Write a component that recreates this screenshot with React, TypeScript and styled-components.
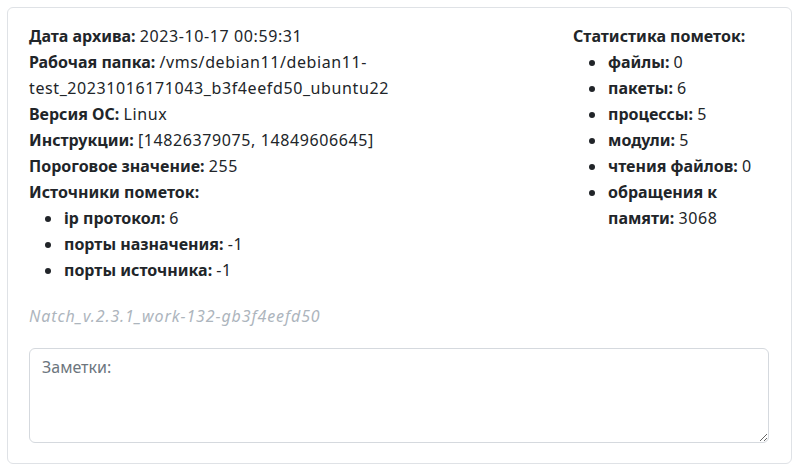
import React from "react";
import styled, { createGlobalStyle } from "styled-components";

const Global = createGlobalStyle`
  html, body { margin: 0; padding: 0; background: #fff; }
  body {
    font-family: "Noto Sans", "Open Sans", sans-serif;
    font-size: 16px;
    color: #212529;
  }
  * { box-sizing: border-box; }
`;

const Page = styled.div`
  padding: 7px 8px 8px 7px;
`;

const Card = styled.div`
  border: 1px solid #dfe2e6;
  border-radius: 6px;
  padding: 15px 22px 20px 21px;
  background: #fff;
`;

const Columns = styled.div`
  display: flex;
  align-items: flex-start;
  gap: 16px;
`;

const InfoCol = styled.div`
  flex: 1;
  min-width: 0;
`;

const StatsCol = styled.div`
  width: 196px;
  flex: none;
  margin-left: -2px;
`;

const Line = styled.div`
  line-height: 26px;
  word-break: break-word;
`;

const Label = styled.b`
  font-weight: 700;
`;

const Value = styled.span`
  letter-spacing: 0.6px;
`;

const List = styled.ul`
  margin: 0;
  padding-left: 34px;
  list-style: disc;
  line-height: 26px;
`;

const Item = styled.li`
  padding-left: 1px;
`;

const Version = styled.div`
  margin-top: 20px;
  line-height: 26px;
  font-style: italic;
  letter-spacing: 0.9px;
  color: #adb5bd;
`;

const Notes = styled.textarea`
  display: block;
  width: 100%;
  height: 95px;
  margin-top: 19px;
  padding: 6px 12px;
  border: 1px solid #d5d9de;
  border-radius: 6px;
  font-family: inherit;
  font-size: 16px;
  line-height: 24px;
  color: #212529;
  resize: vertical;
  outline: none;
  &::placeholder {
    color: #6c757d;
  }
`;

const info: [string, string][] = [
  ["Дата архива:", "2023-10-17 00:59:31"],
  ["Рабочая папка:", "/vms/debian11/debian11-test_20231016171043_b3f4eefd50_ubuntu22"],
  ["Версия ОС:", "Linux"],
  ["Инструкции:", "[14826379075, 14849606645]"],
  ["Пороговое значение:", "255"],
];

const sources: [string, string][] = [
  ["ip протокол:", "6"],
  ["порты назначения:", "-1"],
  ["порты источника:", "-1"],
];

const stats: [string, string][] = [
  ["файлы:", "0"],
  ["пакеты:", "6"],
  ["процессы:", "5"],
  ["модули:", "5"],
  ["чтения файлов:", "0"],
  ["обращения к памяти:", "3068"],
];

export default function App() {
  return (
    <Page>
      <Global />
      <Card>
        <Columns>
          <InfoCol>
            {info.map(([k, v]) => (
              <Line key={k}>
                <Label>{k}</Label> <Value>{v}</Value>
              </Line>
            ))}
            <Line>
              <Label>Источники пометок:</Label>
            </Line>
            <List>
              {sources.map(([k, v]) => (
                <Item key={k}>
                  <Label>{k}</Label> <Value>{v}</Value>
                </Item>
              ))}
            </List>
          </InfoCol>
          <StatsCol>
            <Line>
              <Label>Статистика пометок:</Label>
            </Line>
            <List>
              {stats.map(([k, v]) => (
                <Item key={k}>
                  <Label>{k}</Label> <Value>{v}</Value>
                </Item>
              ))}
            </List>
          </StatsCol>
        </Columns>
        <Version>Natch_v.2.3.1_work-132-gb3f4eefd50</Version>
        <Notes placeholder="Заметки:" />
      </Card>
    </Page>
  );
}
